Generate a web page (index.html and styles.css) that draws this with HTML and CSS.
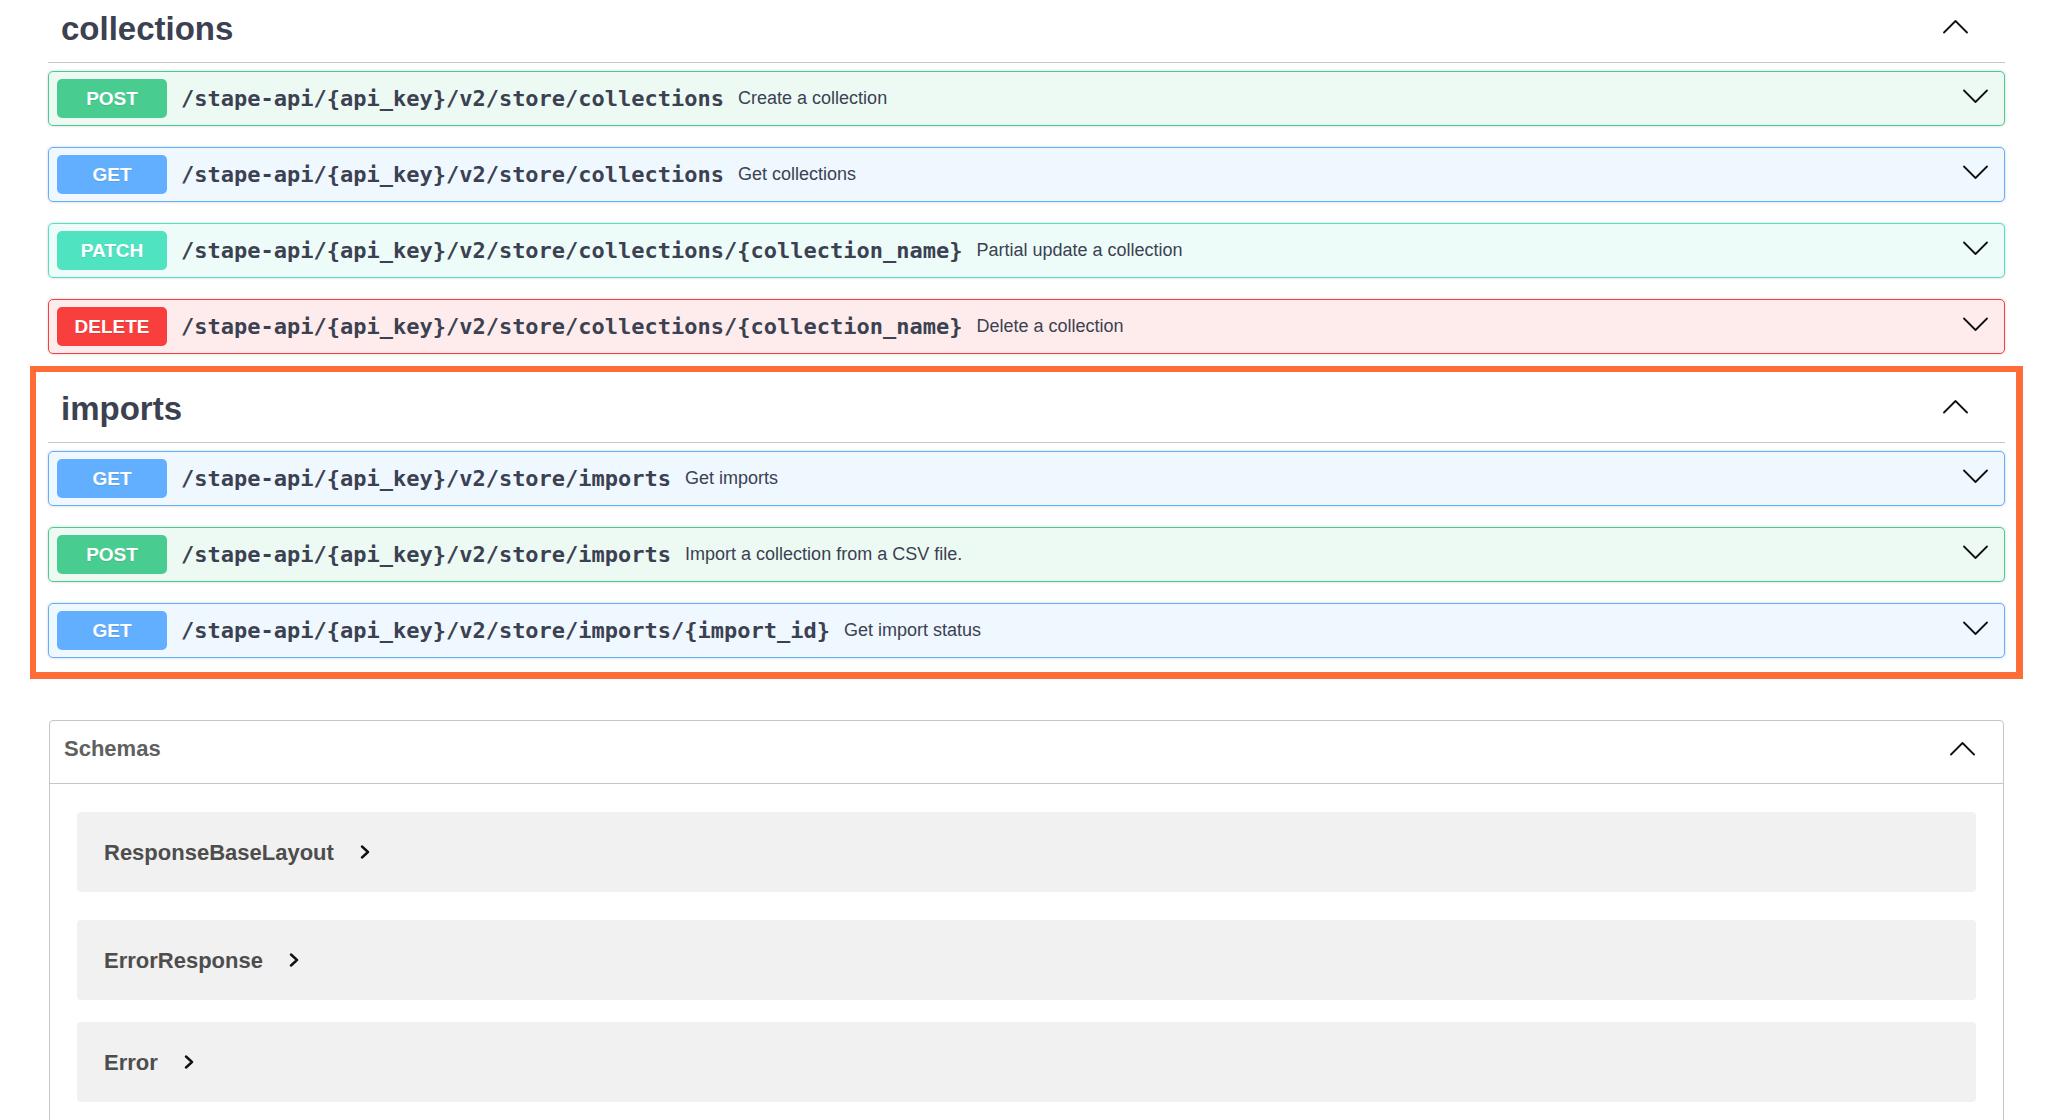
FILE: index.html
```
<!DOCTYPE html>
<html lang="en">
<head>
<meta charset="utf-8">
<title>Stape API</title>
<link rel="stylesheet" href="styles.css">
</head>
<body>
<div class="page">
  <section class="tag-section">
    <h3 class="tag-head">
      <span class="tag-name">collections</span>
      <svg class="chev chev-up" viewBox="0 0 25 15" width="25" height="15"><polyline points="1,13.5 12.5,2 24,13.5"/></svg>
    </h3>
    <div class="ops">
      <div class="op op-post">
        <span class="method">POST</span>
        <span class="path">/stape-api/{api_key}/v2/store/collections</span>
        <span class="desc">Create a collection</span>
        <svg class="chev chev-down" viewBox="0 0 25 15" width="25" height="15"><polyline points="1,1.5 12.5,13 24,1.5"/></svg>
      </div>
      <div class="op op-get">
        <span class="method">GET</span>
        <span class="path">/stape-api/{api_key}/v2/store/collections</span>
        <span class="desc">Get collections</span>
        <svg class="chev chev-down" viewBox="0 0 25 15" width="25" height="15"><polyline points="1,1.5 12.5,13 24,1.5"/></svg>
      </div>
      <div class="op op-patch">
        <span class="method">PATCH</span>
        <span class="path">/stape-api/{api_key}/v2/store/collections/{collection_name}</span>
        <span class="desc">Partial update a collection</span>
        <svg class="chev chev-down" viewBox="0 0 25 15" width="25" height="15"><polyline points="1,1.5 12.5,13 24,1.5"/></svg>
      </div>
      <div class="op op-delete">
        <span class="method">DELETE</span>
        <span class="path">/stape-api/{api_key}/v2/store/collections/{collection_name}</span>
        <span class="desc">Delete a collection</span>
        <svg class="chev chev-down" viewBox="0 0 25 15" width="25" height="15"><polyline points="1,1.5 12.5,13 24,1.5"/></svg>
      </div>
    </div>
  </section>

  <div class="highlight">
    <section class="tag-section">
      <h3 class="tag-head">
        <span class="tag-name">imports</span>
        <svg class="chev chev-up" viewBox="0 0 25 15" width="25" height="15"><polyline points="1,13.5 12.5,2 24,13.5"/></svg>
      </h3>
      <div class="ops">
        <div class="op op-get">
          <span class="method">GET</span>
          <span class="path">/stape-api/{api_key}/v2/store/imports</span>
          <span class="desc">Get imports</span>
          <svg class="chev chev-down" viewBox="0 0 25 15" width="25" height="15"><polyline points="1,1.5 12.5,13 24,1.5"/></svg>
        </div>
        <div class="op op-post">
          <span class="method">POST</span>
          <span class="path">/stape-api/{api_key}/v2/store/imports</span>
          <span class="desc">Import a collection from a CSV file.</span>
          <svg class="chev chev-down" viewBox="0 0 25 15" width="25" height="15"><polyline points="1,1.5 12.5,13 24,1.5"/></svg>
        </div>
        <div class="op op-get">
          <span class="method">GET</span>
          <span class="path">/stape-api/{api_key}/v2/store/imports/{import_id}</span>
          <span class="desc">Get import status</span>
          <svg class="chev chev-down" viewBox="0 0 25 15" width="25" height="15"><polyline points="1,1.5 12.5,13 24,1.5"/></svg>
        </div>
      </div>
    </section>
  </div>

  <section class="models">
    <h4 class="models-head">
      <span>Schemas</span>
      <svg class="chev chev-up" viewBox="0 0 25 15" width="25" height="15"><polyline points="1,13.5 12.5,2 24,13.5"/></svg>
    </h4>
    <div class="models-body">
      <div class="model">
        <span class="model-title">ResponseBaseLayout</span>
        <svg class="model-toggle" viewBox="0 0 10 14" width="10" height="14"><polyline points="2,1.5 8,7 2,12.5"/></svg>
      </div>
      <div class="model">
        <span class="model-title">ErrorResponse</span>
        <svg class="model-toggle" viewBox="0 0 10 14" width="10" height="14"><polyline points="2,1.5 8,7 2,12.5"/></svg>
      </div>
      <div class="model">
        <span class="model-title">Error</span>
        <svg class="model-toggle" viewBox="0 0 10 14" width="10" height="14"><polyline points="2,1.5 8,7 2,12.5"/></svg>
      </div>
    </div>
  </section>
</div>
</body>
</html>
```

FILE: styles.css
```
* {
  box-sizing: border-box;
}

html, body {
  margin: 0;
  padding: 0;
  background: #ffffff;
}

body {
  font-family: "Liberation Sans", Arial, sans-serif;
  color: #3b4151;
}

.page {
  padding: 0 43px 0 48px;
  overflow: hidden;
  height: 1120px;
}

/* ---------- tag sections ---------- */

.tag-head {
  margin: 0;
  display: flex;
  align-items: center;
  justify-content: space-between;
  padding: 10px 37px 15px 13px;
  border-bottom: 1px solid #c4c6cb;
  font-size: 33px;
  line-height: 37px;
  font-weight: 700;
  color: #3b4151;
}

.tag-head .chev {
  margin-bottom: 4px;
}

.ops {
  margin-top: 8px;
  display: flex;
  flex-direction: column;
  gap: 21px;
}

/* ---------- operation rows ---------- */

.op {
  display: flex;
  align-items: center;
  height: 55px;
  padding: 7px 16px 7px 8px;
  border: 1px solid;
  border-radius: 5px;
  box-shadow: 0 0 3px rgba(0, 0, 0, 0.19);
}

.method {
  flex: none;
  width: 110px;
  height: 39px;
  line-height: 39px;
  border-radius: 5px;
  text-align: center;
  color: #ffffff;
  font-size: 19px;
  font-weight: 700;
  text-shadow: 0 1px 0 rgba(0, 0, 0, 0.1);
  margin-right: 14px;
}

.path {
  font-family: "DejaVu Sans Mono", "Liberation Mono", monospace;
  font-weight: 700;
  font-size: 22px;
  color: #3b4151;
  white-space: nowrap;
}

.desc {
  margin-left: 14px;
  font-size: 18px;
  color: #3b4151;
  white-space: nowrap;
  flex: 1;
}

.op .chev {
  margin-bottom: 5px;
}

.chev {
  flex: none;
  fill: none;
  stroke: #111111;
  stroke-width: 1.8;
  stroke-linecap: round;
  stroke-linejoin: round;
}

.op-post {
  border-color: #49cc90;
  background: #edfaf4;
}
.op-post .method {
  background: #49cc90;
}

.op-get {
  border-color: #61affe;
  background: #eff7ff;
}
.op-get .method {
  background: #61affe;
}

.op-patch {
  border-color: #50e3c2;
  background: #eefcf9;
}
.op-patch .method {
  background: #50e3c2;
}

.op-delete {
  border-color: #f93e3e;
  background: #feecec;
}
.op-delete .method {
  background: #f93e3e;
}

/* ---------- highlight annotation ---------- */

.highlight {
  margin: 12px -18px 0 -18px;
  border-style: solid;
  border-color: #ff6c37;
  border-width: 6px 7px 7px 6px;
  padding: 8px 11px 14px 12px;
}

/* ---------- schemas ---------- */

.models {
  margin: 41px 1px 0 1px;
  border: 1px solid #c4c6cb;
  border-radius: 4px;
}

.models-head {
  margin: 0;
  display: flex;
  align-items: center;
  justify-content: space-between;
  padding: 15px 28px 22px 14px;
  border-bottom: 1px solid #c4c6cb;
  font-size: 22px;
  line-height: 25px;
  font-weight: 700;
  color: #606060;
}

.models-body {
  padding: 28px 27px 40px 27px;
}

.model {
  display: flex;
  align-items: center;
  gap: 26px;
  height: 80px;
  padding-left: 27px;
  background: #f1f1f1;
  border-radius: 4px;
  margin-bottom: 22px;
}

.model:first-child {
  margin-bottom: 28px;
}

.model-title {
  font-size: 22px;
  line-height: 25px;
  font-weight: 700;
  color: #4d4d4d;
}

.model-toggle {
  fill: none;
  stroke: #111111;
  stroke-width: 2.4;
  stroke-linecap: round;
  stroke-linejoin: round;
}
```
